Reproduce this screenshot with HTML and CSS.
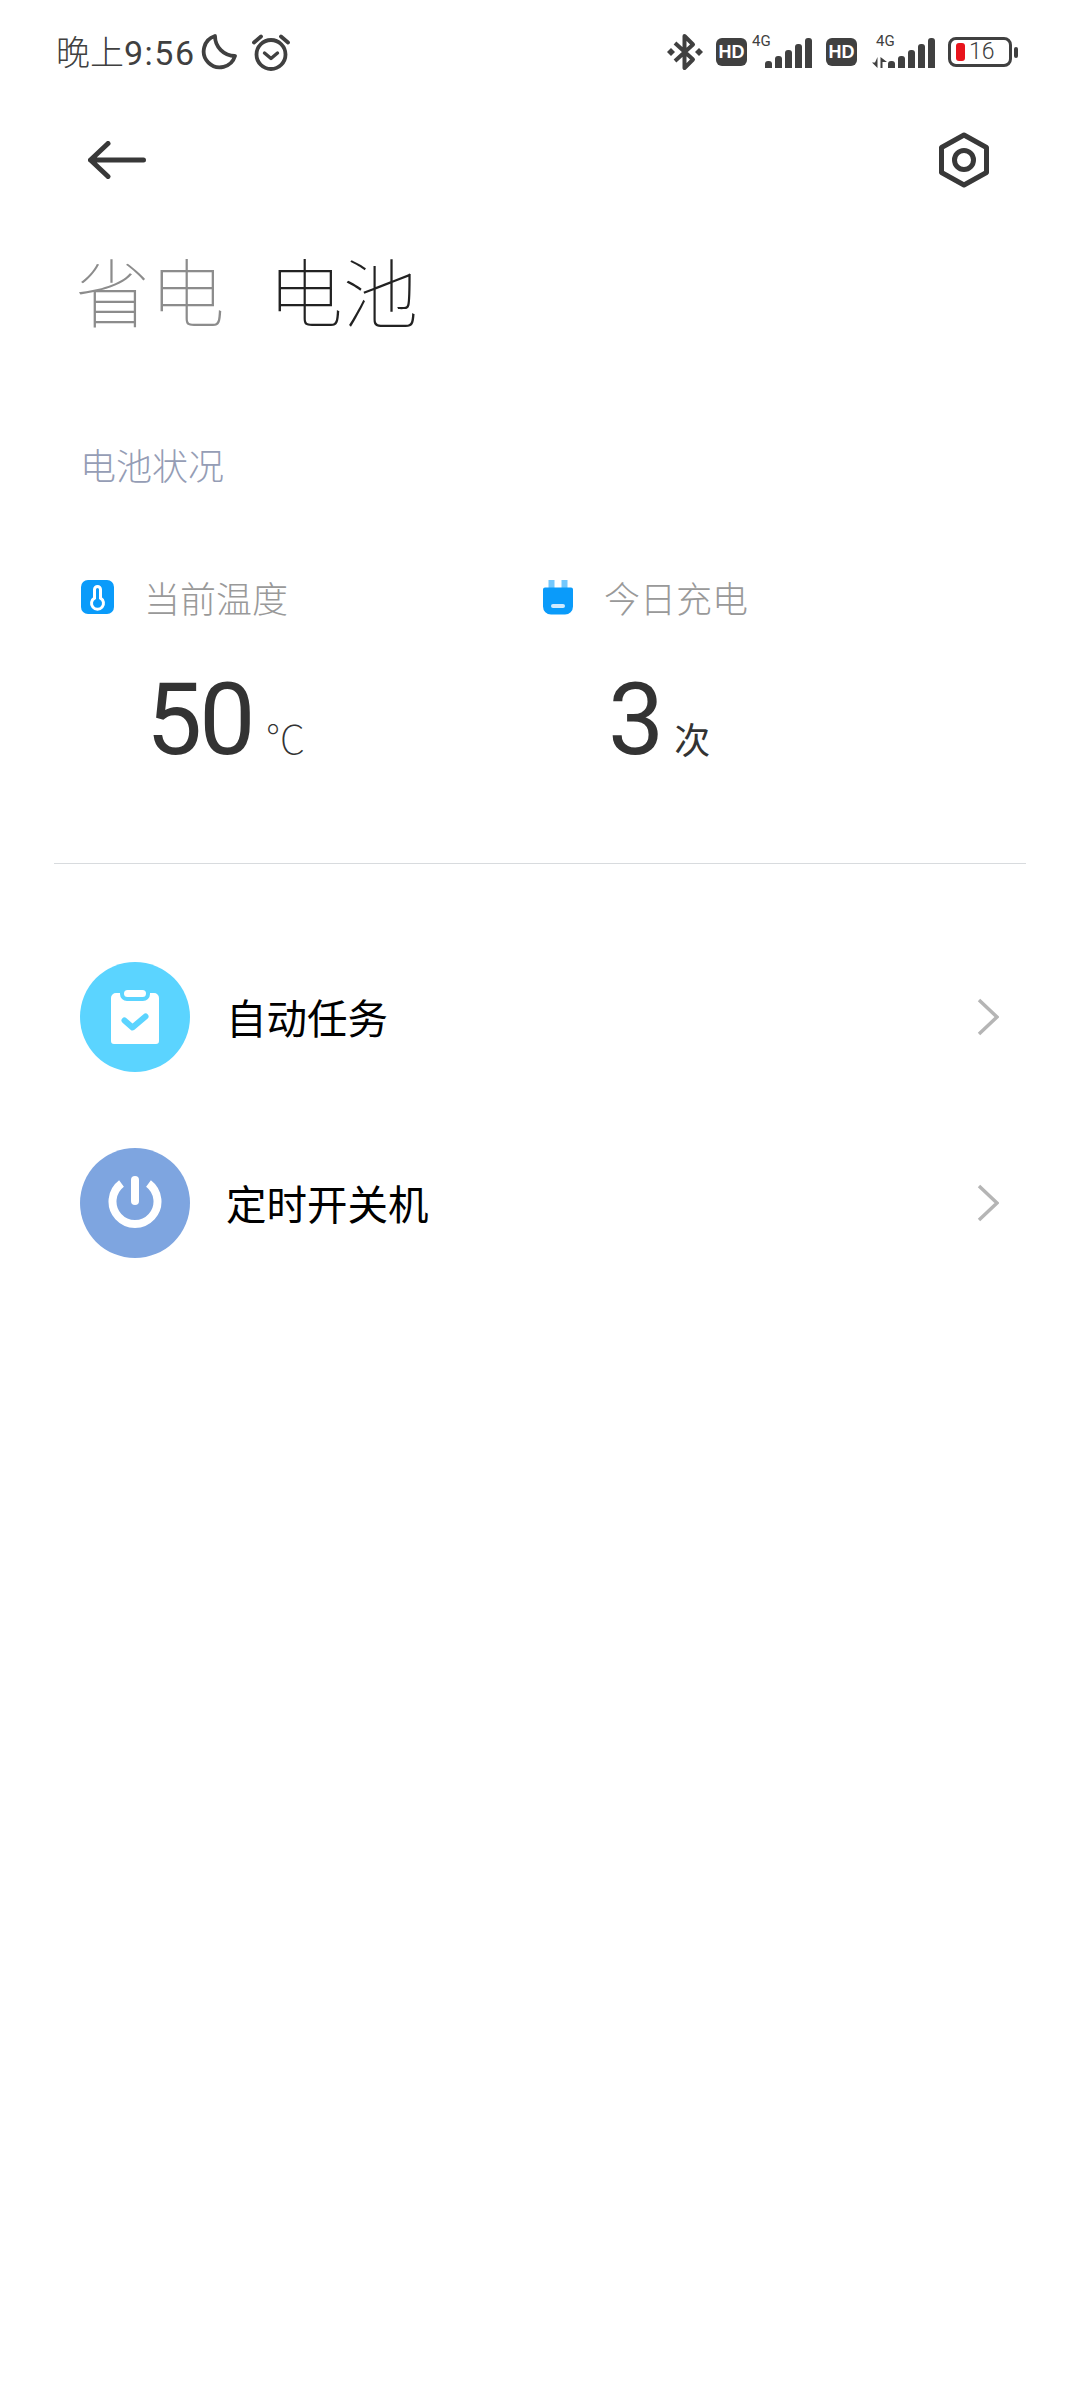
FILE: index.html
```html
<!DOCTYPE html>
<html lang="zh-CN">
<head>
  <meta charset="UTF-8">
  <meta name="viewport" content="width=device-width, initial-scale=1.0">
  <title>电池</title>
  <link rel="stylesheet" href="styles.css">
</head>
<body>

<div class="status-bar">
  <div class="status-left">
    <span class="clock">晚上<span class="clock-time">9:56</span></span>
    <svg class="moon" viewBox="0 0 36 36"><path d="M14 2A16 16 0 1 0 34 22A20 20 0 0 1 14 2Z" fill="none" stroke="#404040" stroke-width="3.800" stroke-linejoin="round"/></svg>
    <svg class="alarm" viewBox="0 0 40 38"><circle cx="20" cy="21.500" r="14.500" fill="none" stroke="#404040" stroke-width="3.800"/><path d="M13.500 20l6.500 5.500 6.500-5.500" fill="none" stroke="#404040" stroke-width="3.400" stroke-linecap="round" stroke-linejoin="round"/><path d="M3 9.500L10 3.500M37 9.500L30 3.500" fill="none" stroke="#404040" stroke-width="3.800" stroke-linecap="round"/></svg>
  </div>
  <div class="status-right">
    <svg class="bluetooth" viewBox="0 0 38 38"><path d="M9 10L27 26.500L18.500 35V3L27 11.500L9 28" fill="none" stroke="#404040" stroke-width="4" stroke-linejoin="round"/><path d="M1 19l4-4 4 4-4 4zM29 19l4-4 4 4-4 4z" fill="#404040"/></svg>
    <span class="hd">HD</span>
    <div class="signal">
      <span class="net">4G</span>
      <div class="bars">
        <i class="b1"></i><i class="b2"></i><i class="b3"></i><i class="b4"></i><i class="b5"></i>
      </div>
    </div>
    <span class="hd hd-second">HD</span>
    <div class="signal signal-second">
      <span class="net">4G</span>
      <svg class="arrows" viewBox="0 0 15 11"><path d="M5.500 0v11L0 5.500h3zM8.500 0v11h2V5h4.500z" fill="#404040"/></svg>
      <div class="bars">
        <i class="b1"></i><i class="b2"></i><i class="b3"></i><i class="b4"></i><i class="b5"></i>
      </div>
    </div>
    <div class="battery">
      <div class="battery-body">
        <i class="battery-level"></i>
        <span class="battery-num">16</span>
      </div>
      <i class="battery-nub"></i>
    </div>
  </div>
</div>

<div class="toolbar">
  <svg class="back" viewBox="0 0 58 38"><path d="M20 2.500L2.500 19 20 35.500M2.500 19H55.500" fill="none" stroke="#383838" stroke-width="5" stroke-linecap="round" stroke-linejoin="round"/></svg>
  <svg class="gear" viewBox="0 0 52 56"><path d="M26 3L48.500 15.500V40.500L26 53L3.500 40.500V15.500Z" fill="none" stroke="#383838" stroke-width="5" stroke-linejoin="round"/><circle cx="26" cy="28" r="9.500" fill="none" stroke="#383838" stroke-width="5"/></svg>
</div>

<div class="tabs">
  <span class="tab">省电</span>
  <span class="tab tab-active">电池</span>
</div>

<div class="section-title">电池状况</div>

<div class="stats">
  <div class="stat">
    <div class="stat-head">
      <svg class="stat-icon" viewBox="0 0 33 34"><rect width="33" height="34" rx="7" fill="#0a9bfa"/><path d="M16.500 6.500a3 3 0 0 1 3 3v8.600a6 6 0 1 1-6 0v-8.600a3 3 0 0 1 3-3z" fill="none" stroke="#fff" stroke-width="3"/></svg>
      <span class="stat-label">当前温度</span>
    </div>
    <div class="stat-value">
      <span class="num">50</span><span class="unit">℃</span>
    </div>
  </div>
  <div class="stat stat-second">
    <div class="stat-head">
      <svg class="stat-icon plug" viewBox="0 0 30 35"><rect x="5.500" y="0" width="6" height="10" fill="#74c8fd"/><rect x="18.500" y="0" width="6" height="10" fill="#74c8fd"/><path d="M2 7.500h26a2 2 0 0 1 2 2v17a8 8 0 0 1-8 8H8a8 8 0 0 1-8-8v-17a2 2 0 0 1 2-2z" fill="#0a9bfa"/><rect x="8" y="24" width="14" height="4" rx="2" fill="#cfeafe"/></svg>
      <span class="stat-label">今日充电</span>
    </div>
    <div class="stat-value">
      <span class="num">3</span><span class="unit unit-cjk">次</span>
    </div>
  </div>
</div>

<div class="divider"></div>

<div class="menu">
  <div class="menu-row">
    <div class="round round-task">
      <svg viewBox="0 0 48 54" class="round-svg"><path d="M5 3h4v1a7 7 0 0 0 7 7h16a7 7 0 0 0 7-7V3h4a5 5 0 0 1 5 5v43a3 3 0 0 1-3 3H3a3 3 0 0 1-3-3V8a5 5 0 0 1 5-5z" fill="#fff"/><rect x="13" y="0" width="22" height="7" rx="3.500" fill="#fff"/><path d="M13.500 30.500l8 7 13-11" fill="none" stroke="#5bd4ff" stroke-width="6" stroke-linecap="round" stroke-linejoin="round"/></svg>
    </div>
    <span class="menu-text">自动任务</span>
    <svg class="chevron" viewBox="0 0 22 38"><path d="M2 2l18 17L2 36" fill="none" stroke="#b5b5b5" stroke-width="3.500"/></svg>
  </div>
  <div class="menu-row">
    <div class="round round-power">
      <svg viewBox="0 0 54 54" class="round-svg power"><path d="M13.500 7.500a22.500 22.500 0 1 0 27 0" fill="none" stroke="#fff" stroke-width="8"/><rect x="23" y="0" width="8" height="29" rx="4" fill="#fff"/></svg>
    </div>
    <span class="menu-text">定时开关机</span>
    <svg class="chevron" viewBox="0 0 22 38"><path d="M2 2l18 17L2 36" fill="none" stroke="#b5b5b5" stroke-width="3.500"/></svg>
  </div>
</div>

</body>
</html>
```

FILE: styles.css
```css
* {
  box-sizing: border-box;
}
body {
  margin: 0;
  width: 1080px;
  height: 2400px;
  background-color: #fff;
  font-family: "Noto Sans CJK SC", Roboto, sans-serif;
  overflow: hidden;
}

/* status bar */
.status-bar {
  height: 104px;
  display: flex;
  justify-content: space-between;
  align-items: center;
  padding: 0 62px 0 56px;
}
.status-left, .status-right {
  display: flex;
  align-items: center;
}
.clock {
  font-size: 34px;
  line-height: 40px;
  font-weight: 300;
  color: #404040;
  white-space: nowrap;
}
.clock-time {
  font-family: Roboto, sans-serif;
  font-weight: 400;
  letter-spacing: 1.500px;
}
.moon {
  width: 36px;
  height: 36px;
  margin-left: 5px;
}
.alarm {
  width: 40px;
  height: 38px;
  margin-left: 14px;
}
.bluetooth {
  width: 38px;
  height: 38px;
}
.hd {
  width: 31px;
  height: 28px;
  margin-left: 12px;
  background-color: #404040;
  border-radius: 6px;
  color: #fff;
  font-family: "Liberation Sans", sans-serif;
  font-weight: 700;
  font-size: 18px;
  line-height: 28px;
  text-align: center;
}
.hd-second {
  margin-left: 14px;
}
.signal {
  position: relative;
  width: 60px;
  height: 32px;
  margin-left: 5px;
  display: flex;
  justify-content: flex-end;
  align-items: flex-end;
}
.signal-second {
  width: 66px;
  margin-left: 12px;
}
.net {
  position: absolute;
  top: -3px;
  left: 0;
  font-family: Roboto, sans-serif;
  font-size: 15px;
  line-height: 16px;
  color: #404040;
}
.signal-second .net {
  left: 7px;
}
.arrows {
  width: 15px;
  height: 11px;
  margin-right: 1px;
}
.bars {
  display: flex;
  align-items: flex-end;
  gap: 3px;
}
.bars i {
  display: block;
  width: 7px;
  background-color: #404040;
  border-radius: 3px 3px 0 0;
}
.bars .b1 { height: 7px; }
.bars .b2 { height: 12px; }
.bars .b3 { height: 18px; }
.bars .b4 { height: 24px; }
.bars .b5 { height: 30px; }
.battery {
  display: flex;
  align-items: center;
  margin-left: 13px;
}
.battery-body {
  width: 64px;
  height: 30px;
  border: 3px solid #404040;
  border-radius: 8px;
  display: flex;
  align-items: center;
  padding-left: 5px;
}
.battery-level {
  width: 9px;
  height: 18px;
  border-radius: 3px;
  background-color: #e8141c;
}
.battery-num {
  margin-left: 4px;
  font-family: Roboto, sans-serif;
  font-weight: 300;
  font-size: 23px;
  line-height: 24px;
  color: #404040;
}
.battery-nub {
  width: 4px;
  height: 11px;
  margin-left: 2px;
  border-radius: 2px;
  background-color: #404040;
}

/* toolbar */
.toolbar {
  height: 112px;
  display: flex;
  justify-content: space-between;
  align-items: center;
  padding: 0 90px 0 88px;
}
.back {
  width: 58px;
  height: 38px;
}
.gear {
  width: 52px;
  height: 56px;
}

/* title tabs */
.tabs {
  display: flex;
  gap: 43px;
  margin-top: 32px;
  padding-left: 75px;
}
.tab {
  font-size: 75px;
  line-height: 84px;
  font-weight: 100;
  color: #8c8c8c;
}
.tab-active {
  color: #222;
}

.section-title {
  margin-top: 108px;
  padding-left: 80px;
  font-size: 36px;
  line-height: 48px;
  font-weight: 300;
  color: #959db5;
}

/* stats */
.stats {
  display: flex;
  margin-top: 85px;
  padding-left: 81px;
}
.stat {
  width: 462px;
}
.stat-head {
  display: flex;
  align-items: center;
  height: 48px;
}
.stat-icon {
  width: 33px;
  height: 34px;
}
.stat-icon.plug {
  width: 30px;
  height: 35px;
}
.stat-label {
  margin-left: 30px;
  font-size: 36px;
  line-height: 48px;
  font-weight: 300;
  color: #999;
}
.plug + .stat-label {
  margin-left: 31px;
}
.stat-value {
  display: flex;
  align-items: baseline;
  margin-top: 44px;
  padding-left: 65px;
  color: #333;
}
.num {
  font-family: Roboto, sans-serif;
  font-size: 100px;
  line-height: 110px;
  font-weight: 400;
  letter-spacing: -3px;
}
.unit {
  margin-left: 13px;
  font-size: 40px;
  line-height: 44px;
  font-weight: 100;
}
.unit-cjk {
  margin-left: 13px;
  font-size: 36px;
  font-weight: 400;
}

.divider {
  height: 1px;
  margin: 88px 54px 0;
  background-color: #d8dbde;
}

/* menu */
.menu {
  display: flex;
  flex-direction: column;
  gap: 76px;
  margin-top: 98px;
  padding: 0 81px 0 80px;
}
.menu-row {
  display: flex;
  align-items: center;
  height: 110px;
}
.round {
  width: 110px;
  height: 110px;
  border-radius: 50%;
  display: flex;
  justify-content: center;
  align-items: center;
}
.round-task {
  background-color: #5bd4ff;
}
.round-power {
  background-color: #7ea5e0;
}
.round-svg {
  width: 48px;
  height: 54px;
}
.round-svg.power {
  width: 54px;
}
.menu-text {
  margin-left: 36px;
  font-size: 40.500px;
  line-height: 56px;
  color: #000;
}
.chevron {
  width: 22px;
  height: 38px;
  margin-left: auto;
}
```
